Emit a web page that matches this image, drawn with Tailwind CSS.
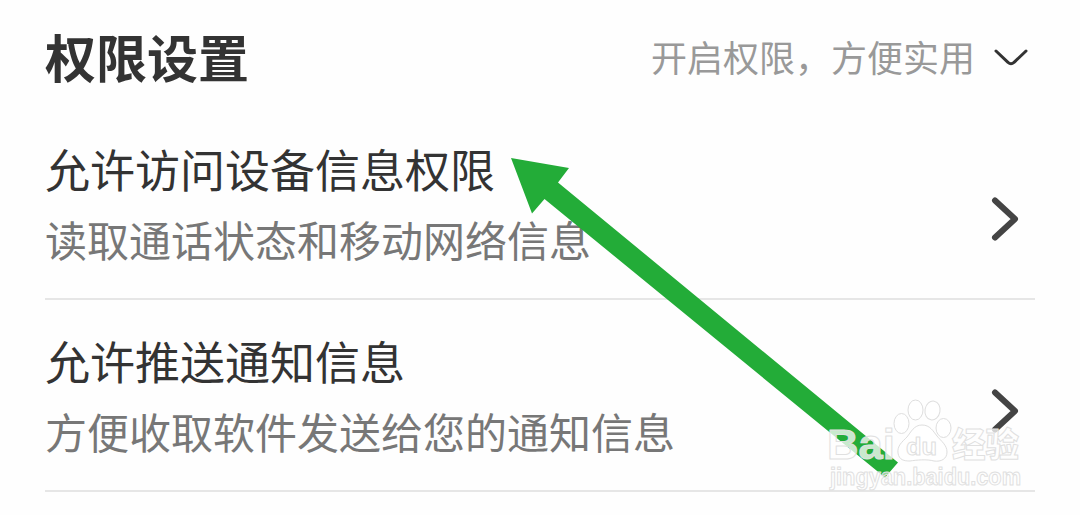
<!DOCTYPE html>
<html lang="zh-CN">
  <head>
    <meta charset="UTF-8" />
    <meta name="viewport" content="width=device-width, initial-scale=1.0" />
    <title>权限设置</title>
    <script src="https://cdn.jsdelivr.net/npm/@tailwindcss/browser@4"></script>
  </head>
  <body
    class="relative h-screen overflow-hidden bg-[#fefefe] font-['Noto_Sans_CJK_SC',sans-serif] text-[#333333]"
  >
    <!-- Header -->
    <header class="flex h-[108px] items-start justify-between pl-[45px] pr-[52px]">
      <h1 class="mt-[6px] text-[51px] leading-[100px] font-bold">权限设置</h1>
      <div class="mt-[6px] flex items-center gap-[19px]">
        <span class="text-[36px] leading-[100px] text-[#999999]">开启权限，方便实用</span>
        <svg class="mt-[4px] h-[20px] w-[34px]" viewBox="0 0 34 20" fill="none" stroke="#333333" stroke-width="3" stroke-linecap="round" stroke-linejoin="round">
          <path d="M2 3L14 14.4Q17 17 20 14.4L32 3" />
        </svg>
      </div>
    </header>

    <!-- Permission list -->
    <main class="ml-[45px] mr-[45px]">
      <div class="flex h-[192px] items-center justify-between border-b-2 border-[#e6e6e6] pt-[30px] pr-[15px]">
        <div class="flex flex-col gap-[10px] self-start pt-px">
          <h2 class="text-[45px] leading-[60px]">允许访问设备信息权限</h2>
          <p class="text-[42px] leading-[60px] text-[#777777]">读取通话状态和移动网络信息</p>
        </div>
        <svg class="mt-[2px] h-[46px] w-[30px]" viewBox="0 0 30 46" fill="none" stroke="#444444" stroke-width="6" stroke-linecap="round" stroke-linejoin="round">
          <path d="M5 4.5L25 23L5 41.5" />
        </svg>
      </div>
      <div class="flex h-[192px] items-center justify-between border-b-2 border-[#e6e6e6] pt-[30px] pr-[15px]">
        <div class="flex flex-col gap-[10px] self-start pt-px">
          <h2 class="text-[45px] leading-[60px]">允许推送通知信息</h2>
          <p class="text-[42px] leading-[60px] text-[#777777]">方便收取软件发送给您的通知信息</p>
        </div>
        <svg class="mt-[2px] h-[46px] w-[30px]" viewBox="0 0 30 46" fill="none" stroke="#444444" stroke-width="6" stroke-linecap="round" stroke-linejoin="round">
          <path d="M5 4.5L25 23L5 41.5" />
        </svg>
      </div>
    </main>

    <!-- Arrow and watermark on top of the list -->
    <svg class="pointer-events-none absolute inset-0" width="1080" height="515" viewBox="0 0 1080 515">
      <path d="M511 158L569 168L558 182.500L898 462.500L885 477.500L544.500 199L532 213.500Z" fill="#23ac38" />
      <g fill="#ffffff" fill-opacity="0.75" stroke="#dedede" stroke-width="1" stroke-linejoin="round">
        <ellipse cx="901.500" cy="423.500" rx="7.500" ry="10" />
        <ellipse cx="915.500" cy="410" rx="7.500" ry="10" />
        <ellipse cx="932.500" cy="410.500" rx="7.500" ry="9.500" transform="rotate(10 932.500 410.500)" />
        <ellipse cx="943.500" cy="428" rx="7.500" ry="9.500" />
        <path d="M922 425C914 425 911 432 907 437C902 442 897 446 898 453C899 460 904 461 910 461C916 460 927 459 934 461C941 462 947 459 947 452C947 445 941 441 937 436C933 431 930 425 922 425Z" />
      </g>
      <g fill="#ffffff" fill-opacity="0.75" stroke="#e0e0e0" stroke-width="1" stroke-linejoin="round" class="font-['Liberation_Sans','Noto_Sans_CJK_SC',sans-serif]">
        <text x="827" y="459" font-size="43" font-weight="700" textLength="68" lengthAdjust="spacingAndGlyphs">Bai</text>
        <text x="906" y="455" font-size="24" font-weight="700" textLength="31" lengthAdjust="spacingAndGlyphs">du</text>
        <text x="952" y="457" font-size="34" font-weight="900" textLength="67" lengthAdjust="spacingAndGlyphs">经验</text>
        <text x="830" y="485" font-size="23" font-weight="700" textLength="191" lengthAdjust="spacingAndGlyphs" fill-opacity="0.5">jingyan.baidu.com</text>
      </g>
    </svg>
  </body>
</html>
